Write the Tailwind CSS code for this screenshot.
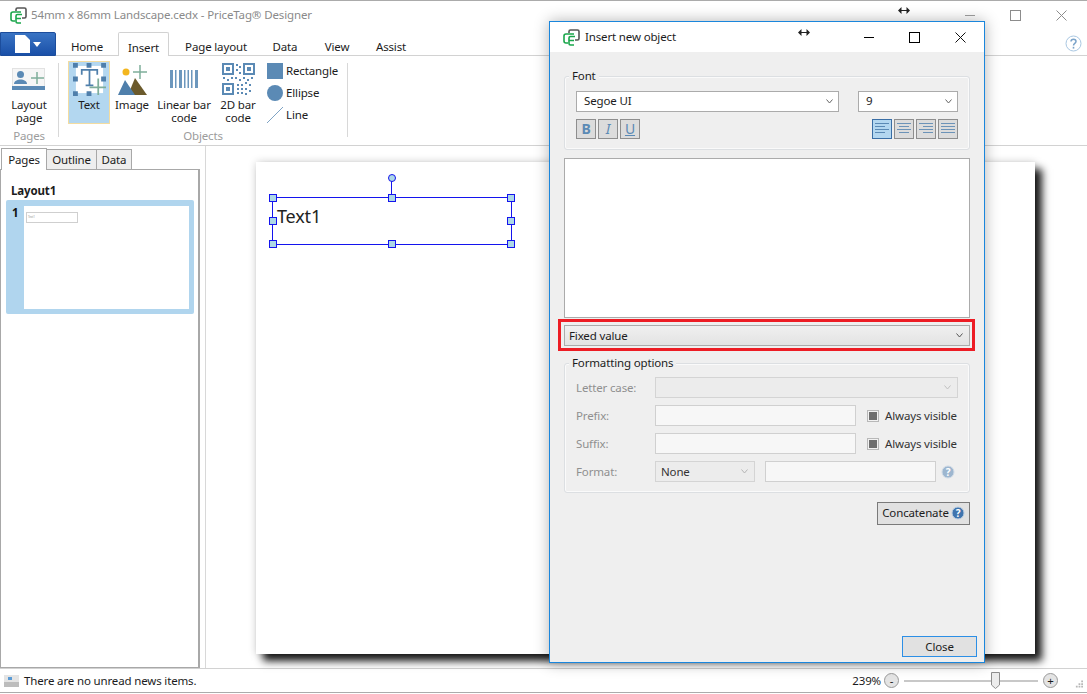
<!DOCTYPE html>
<html lang="en">
<head>
  <meta charset="UTF-8">
  <script src="https://cdn.jsdelivr.net/npm/@tailwindcss/browser@4"></script>
  <title>PriceTag Designer</title>
</head>
<body class="relative w-[1087px] h-[694px] overflow-hidden bg-white text-[11.5px] leading-[14px] tracking-[-0.15px] text-[#1c1c1c] font-['Noto_Sans',sans-serif]">

  <!-- main window -->
  <div class="flex flex-col h-[693px] border-t border-b border-[#ababab]">
    <!-- title bar -->
    <div class="flex items-center h-[31px] shrink-0 pl-[10px] pb-[3px]">
      <svg width="17" height="17" viewBox="0 0 17 17" fill="none" stroke-width="1.6">
        <path d="M6 4V2.500A1.500 1.500 0 0 1 7.500 1H14.500A1.500 1.500 0 0 1 16 2.500V9.500A1.500 1.500 0 0 1 14.500 11H12" stroke="#555"/>
        <path d="M11 5H3A2 2 0 0 0 1 7V12A2 2 0 0 0 3 14H5" stroke="#1aa64b"/>
        <path d="M12 7.500H7.500A1.500 1.500 0 0 0 6 9V14.500A1.500 1.500 0 0 0 7.500 16H11M6.500 11.500H11" stroke="#1aa64b"/>
      </svg>
      <span class="ml-[4px] text-[#8a8a8a] tracking-[-0.13px]">54mm x 86mm Landscape.cedx - PriceTag® Designer</span>
      <div class="ml-auto flex items-center">
        <span class="block w-[10px] h-px bg-[#a0a0a0] mr-[35px]"></span>
        <span class="block w-[11px] h-[11px] border border-[#8c8c8c] mr-[35px]"></span>
        <svg class="mr-[20px]" width="11" height="11" viewBox="0 0 11 11" stroke="#8c8c8c"><path d="M.5 .5L10.500 10.500M10.500 .5L.5 10.500"/></svg>
      </div>
    </div>

    <!-- ribbon tabs -->
    <div class="flex items-end h-[24px] shrink-0 border-b border-[#d2d2d2]">
      <div class="flex items-center justify-center gap-[3px] w-[56px] h-[24px] -mb-px rounded-tr-[2px] border border-[#1c4d9c] bg-gradient-to-b from-[#3a74c4] to-[#1a50a8]">
        <svg width="15" height="18" viewBox="0 0 15 18"><path d="M0 0H10L15 5V18H0Z" fill="#fff"/></svg>
        <svg width="8" height="5" viewBox="0 0 8 5"><path d="M0 0H8L4 5Z" fill="#fff"/></svg>
      </div>
      <div class="w-[62px] h-[23px] pt-[7px] flex items-center justify-center">Home</div>
      <div class="w-[51px] h-[24px] pt-[7px] -mb-px flex items-center justify-center bg-white border border-b-0 border-[#d2d2d2] rounded-t-[2px]">Insert</div>
      <div class="w-[94px] h-[23px] pt-[7px] flex items-center justify-center">Page layout</div>
      <div class="w-[44px] h-[23px] pt-[7px] flex items-center justify-center">Data</div>
      <div class="w-[60px] h-[23px] pt-[7px] flex items-center justify-center">View</div>
      <div class="w-[48px] h-[23px] pt-[7px] flex items-center justify-center">Assist</div>
      <svg class="ml-auto mr-[5px] mb-[3px]" width="17" height="17" viewBox="0 0 17 17"><circle cx="8.500" cy="8.500" r="7.500" fill="#fff" stroke="#a9c7e2"/><path d="M6 6.500C6 3.500 11 3.500 11 6.500C11 8.500 8.500 8.300 8.500 10.500" fill="none" stroke="#7ba3c9" stroke-width="1.500"/><rect x="7.700" y="11.800" width="1.600" height="1.800" fill="#7ba3c9"/></svg>
    </div>

    <!-- ribbon -->
    <div class="flex h-[90px] shrink-0 border-b border-[#d2d2d2] pt-[5px]">
      <div class="flex flex-col items-center w-[58px]">
        <div class="flex flex-col items-center h-[68px]">
          <svg class="mt-[7px]" width="33" height="22" viewBox="0 0 33 22">
            <rect x=".5" y=".5" width="32" height="21" fill="#f6f6f6" stroke="#e2e2e2"/>
            <rect x="0" y="18" width="33" height="4" fill="#5b8ab5"/>
            <circle cx="8.500" cy="6.500" r="3.500" fill="#5b8ab5"/>
            <path d="M2 16C2 10 15 10 15 16Z" fill="#5b8ab5"/>
            <path d="M25 4V16M19 10H32" stroke="#7fae9b" stroke-width="1.500"/>
          </svg>
          <div class="text-center mt-[8px] leading-[13px]">Layout<br>page</div>
        </div>
        <div class="text-[#9c9c9c]">Pages</div>
      </div>
      <div class="w-px h-[74px] mt-[2px] bg-[#d8d8d8]"></div>

      <div class="flex flex-col items-center w-[288px]">
        <div class="flex h-[68px] w-full pl-[9px]">
          <div class="flex flex-col items-center w-[42px] h-[63px] bg-[#b3d7f0] border border-[#f3dca0]">
            <svg class="mt-[1px]" width="33" height="33" viewBox="0 0 34 34">
              <rect x="3" y="3" width="28" height="28" fill="#fff"/>
              <path d="M0 0h5v5h-5zM14 0h5v5h-5zM29 0h5v5h-5zM0 14h5v5h-5zM29 14h5v5h-5zM0 29h5v5h-5zM14 29h5v5h-5z" fill="#4f7fab"/>
              <path d="M9 12V7H25V12M17 7V23M13 23H21" fill="none" stroke="#4f7fab" stroke-width="1.800"/>
              <path d="M26 16V33M17 25H34" stroke="#7fae9b" stroke-width="1.800"/>
            </svg>
            <span class="mt-[2px]">Text</span>
          </div>
          <div class="flex flex-col items-center w-[44px] pl-[2px]">
            <svg class="mt-[4px]" width="31" height="30" viewBox="0 0 31 30">
              <circle cx="8" cy="7" r="3.500" fill="#f3b61f"/>
              <path d="M22 0V14M15 7H29" stroke="#7fae9b" stroke-width="1.500"/>
              <path d="M10 30L17 13L29 30Z" fill="#6b5a2c"/>
              <path d="M0 30L7 15L17 30Z" fill="#4f7fab"/>
            </svg>
            <span class="mt-[3px] -ml-[2px]">Image</span>
          </div>
          <div class="flex flex-col items-center w-[60px]">
            <svg class="mt-[9px]" width="28" height="18" viewBox="0 0 28 18" fill="#6c97bd">
              <path d="M0 0h3v18h-3zM5 0h1.500v18h-1.500zM9 0h3v18h-3zM14 0h1.500v18h-1.500zM17.500 0h1.500v18h-1.500zM21 0h1.500v18h-1.500zM25 0h3v18h-3z"/>
            </svg>
            <div class="text-center leading-[13px] mt-[10px] whitespace-nowrap">Linear bar<br>code</div>
          </div>
          <div class="flex flex-col items-center w-[48px]">
            <svg class="mt-[2px]" width="33" height="32" viewBox="0 0 33 32" fill="#5b8ab5">
              <path fill-rule="evenodd" d="M0 0h12v12h-12zM2 2v8h8v-8zM21 0h12v12h-12zM23 2v8h8v-8zM0 20h12v12h-12zM2 22v8h8v-8z"/>
              <path d="M4 4h4v4h-4zM25 4h4v4h-4zM4 24h4v4h-4zM14 1h2v2h-2zM17 3h2v2h-2zM14 6h2v2h-2zM17 9h2v2h-2zM1 14h2v2h-2zM5 16h2v2h-2zM9 14h2v2h-2zM13 14h2v2h-2zM17 16h2v2h-2zM21 14h2v2h-2zM25 16h2v2h-2zM29 14h2v2h-2zM15 21h2v2h-2zM19 21h2v2h-2zM23 19h2v2h-2zM27 21h2v2h-2zM15 25h2v2h-2zM19 25h2v2h-2zM23 25h2v2h-2zM27 27h2v2h-2zM15 29h2v2h-2zM19 29h2v2h-2zM23 30h2v2h-2z"/>
            </svg>
            <div class="text-center leading-[13px] mt-[3px] whitespace-nowrap">2D bar<br>code</div>
          </div>
          <div class="flex flex-col ml-[5px] pt-[2px] gap-[6px]">
            <div class="flex items-center gap-[3px] h-[16px]"><span class="block w-[16px] h-[16px] bg-[#5b8ab5]"></span>Rectangle</div>
            <div class="flex items-center gap-[3px] h-[16px]"><span class="block w-[16px] h-[16px] rounded-full bg-[#5b8ab5]"></span>Ellipse</div>
            <div class="flex items-center gap-[3px] h-[16px]"><svg width="16" height="16" viewBox="0 0 16 16"><path d="M0 16L16 0" stroke="#7fa3c4"/></svg>Line</div>
          </div>
        </div>
        <div class="text-[#9c9c9c]">Objects</div>
      </div>
      <div class="w-px h-[74px] mt-[2px] bg-[#d8d8d8]"></div>
    </div>

    <!-- work area -->
    <div class="flex flex-1 min-h-0 border-b border-[#d2d2d2]">
      <!-- left panel -->
      <div class="flex flex-col w-[200px] shrink-0 pt-[1px]">
        <div class="flex items-end h-[22px] pl-px">
          <div class="w-[46px] h-[22px] -mb-px z-10 flex items-center justify-center bg-white border border-b-0 border-[#a8a8a8]">Pages</div>
          <div class="w-[50px] h-[20px] flex items-center justify-center bg-[#eeeeee] border border-l-0 border-b-0 border-[#a8a8a8]">Outline</div>
          <div class="w-[35px] h-[20px] flex items-center justify-center bg-[#eeeeee] border border-l-0 border-b-0 border-[#a8a8a8]">Data</div>
        </div>
        <div class="flex-1 border border-[#a8a8a8] border-r-2 pl-[5px] pr-[4px] pt-[14px]">
          <div class="font-bold pl-[5px] h-[16px]">Layout1</div>
          <div class="flex h-[114px] rounded-[2px] bg-[#b0d5ee] p-[6px] pr-[5px]">
            <span class="w-[12px] font-bold text-[#111]">1</span>
            <div class="flex-1 h-[103px] bg-white p-[2px] pt-[6px]">
              <div class="w-[52px] h-[11px] border border-[#cfcfcf] text-[3px] leading-[9px] pl-[1px] text-[#999]">Text1</div>
            </div>
          </div>
        </div>
      </div>

      <!-- canvas -->
      <div class="flex-1 ml-[5px] border-l border-[#d8d8d8] pl-[50px] pt-[16px]">
        <div class="w-[779px] h-[492px] bg-white pt-[35px] pl-[16px] shadow-[0_0_8px_rgba(0,0,0,0.18),7px_7px_8px_rgba(0,0,0,0.9)]">
          <div class="relative w-[240px] h-[48px] border-[1.5px] border-[#1414ee] pl-[4px] pt-[6px] text-[18px] leading-[24px] text-[#222]">
            Text1
            <span class="absolute -left-[4px] -top-[4px] w-[8px] h-[8px] bg-[#add8e6] border border-[#1414ee]"></span>
            <span class="absolute left-[115px] -top-[4px] w-[8px] h-[8px] bg-[#add8e6] border border-[#1414ee]"></span>
            <span class="absolute -right-[4px] -top-[4px] w-[8px] h-[8px] bg-[#add8e6] border border-[#1414ee]"></span>
            <span class="absolute -left-[4px] top-[19px] w-[8px] h-[8px] bg-[#add8e6] border border-[#1414ee]"></span>
            <span class="absolute -right-[4px] top-[19px] w-[8px] h-[8px] bg-[#add8e6] border border-[#1414ee]"></span>
            <span class="absolute -left-[4px] -bottom-[4px] w-[8px] h-[8px] bg-[#add8e6] border border-[#1414ee]"></span>
            <span class="absolute left-[115px] -bottom-[4px] w-[8px] h-[8px] bg-[#add8e6] border border-[#1414ee]"></span>
            <span class="absolute -right-[4px] -bottom-[4px] w-[8px] h-[8px] bg-[#add8e6] border border-[#1414ee]"></span>
            <span class="absolute left-[118px] -top-[17px] w-px h-[14px] bg-[#1414ee]"></span>
            <span class="absolute left-[115px] -top-[24px] w-[8px] h-[8px] rounded-full bg-[#add8e6] border border-[#1414ee]"></span>
          </div>
        </div>
      </div>
    </div>

    <!-- status bar -->
    <div class="flex items-center h-[23px] shrink-0 pl-[4px]">
      <svg width="15" height="12" viewBox="0 0 15 12"><rect width="15" height="12" fill="#e4e4e4"/><rect y="7" width="15" height="5" fill="#bdbdbd"/><rect x="4" y="2" width="4" height="3" fill="#5b9bd5"/></svg>
      <span class="ml-[5px]">There are no unread news items.</span>
      <div class="ml-auto flex items-center pr-[4px]">
        <span>239%</span>
        <span class="ml-[3px] flex items-center justify-center w-[15px] h-[15px] rounded-full bg-[#e4e4e4] border border-[#9a9a9a] leading-[11px]">-</span>
        <div class="relative w-[134px] h-[2px] mx-[5px] bg-[#c8c8c8]">
          <svg class="absolute left-[87px] -top-[8px]" width="9" height="17" viewBox="0 0 9 17"><path d="M.5 .5H8.500V13L4.500 16.500L.5 13Z" fill="#ececec" stroke="#8e8e8e"/></svg>
        </div>
        <span class="flex items-center justify-center w-[15px] h-[15px] rounded-full bg-[#e4e4e4] border border-[#9a9a9a] leading-[11px]">+</span>
        <svg class="ml-[17px] mt-[8px]" width="8" height="9" viewBox="0 0 9 9" fill="#b8b8b8"><path d="M7 0h2v2h-2zM4 3h2v2h-2zM7 3h2v2h-2zM1 6h2v2h-2zM4 6h2v2h-2zM7 6h2v2h-2z"/></svg>
      </div>
    </div>
  </div>

  <!-- dialog -->
  <div class="absolute left-[549px] top-[21px] w-[436px] h-[642px] flex flex-col border border-[#1a86dc] bg-[#efefef] shadow-[0_0_14px_rgba(0,0,0,0.3)]">
    <div class="flex items-center h-[30px] shrink-0 bg-white pl-[13px]">
      <svg width="17" height="17" viewBox="0 0 17 17" fill="none" stroke-width="1.600">
        <path d="M6 4V2.500A1.500 1.500 0 0 1 7.500 1H14.500A1.500 1.500 0 0 1 16 2.500V9.500A1.500 1.500 0 0 1 14.500 11H12" stroke="#555"/>
        <path d="M11 5H3A2 2 0 0 0 1 7V12A2 2 0 0 0 3 14H5" stroke="#1aa64b"/>
        <path d="M12 7.500H7.500A1.500 1.500 0 0 0 6 9V14.500A1.500 1.500 0 0 0 7.500 16H11M6.500 11.500H11" stroke="#1aa64b"/>
      </svg>
      <span class="ml-[5px]">Insert new object</span>
      <div class="ml-auto flex items-center pr-[18px]">
        <span class="block w-[10px] h-px bg-black mr-[35px]"></span>
        <span class="block w-[11px] h-[11px] border border-black mr-[35px]"></span>
        <svg width="11" height="11" viewBox="0 0 11 11" stroke="#111"><path d="M.5 .5L10.500 10.500M10.500 .5L.5 10.500"/></svg>
      </div>
    </div>

    <div class="flex flex-col flex-1 pl-[14px] pr-[14px] pt-[24px] pb-[5px]">
      <!-- font group -->
      <div class="relative h-[74px] shrink-0 rounded-[3px] border border-[#dcdfe2] shadow-[inset_0_0_0_1px_#fafafa] pt-[14px] pl-[11px] pr-[11px]">
        <span class="absolute left-[4px] -top-[8px] px-[3px] bg-[#efefef]">Font</span>
        <div class="flex justify-between">
          <div class="flex items-center justify-between w-[263px] h-[21px] pb-px bg-white border border-[#ababab] pl-[7px] pr-[5px]">Segoe UI
            <svg width="7" height="5" viewBox="0 0 7 5" fill="none" stroke="#666"><path d="M.5 .5L3.500 4L6.500 .5"/></svg></div>
          <div class="flex items-center justify-between w-[100px] h-[21px] pb-px bg-white border border-[#ababab] pl-[7px] pr-[5px]">9
            <svg width="7" height="5" viewBox="0 0 7 5" fill="none" stroke="#666"><path d="M.5 .5L3.500 4L6.500 .5"/></svg></div>
        </div>
        <div class="flex justify-between mt-[7px]">
          <div class="flex gap-[2px] text-[14px] text-[#5b8ab5]">
            <span class="flex items-center justify-center w-[20px] h-[20px] bg-[#dcdcdc] border border-[#8e8e8e] font-bold">B</span>
            <span class="flex items-center justify-center w-[20px] h-[20px] bg-[#dcdcdc] border border-[#8e8e8e] italic">I</span>
            <span class="flex items-center justify-center w-[20px] h-[20px] bg-[#dcdcdc] border border-[#8e8e8e] underline">U</span>
          </div>
          <div class="flex gap-[2px]">
            <span class="flex items-center justify-center w-[20px] h-[20px] bg-[#b3d7f0] border border-[#3a6ea5]"><svg width="14" height="12" viewBox="0 0 14 12" stroke="#5b8ab5"><path d="M0 .5H14M0 3.500H10M0 6.500H14M0 9.500H10"/></svg></span>
            <span class="flex items-center justify-center w-[20px] h-[20px] bg-[#dcdcdc] border border-[#8e8e8e]"><svg width="14" height="12" viewBox="0 0 14 12" stroke="#6c93b8"><path d="M0 .5H14M2 3.500H12M0 6.500H14M2 9.500H12"/></svg></span>
            <span class="flex items-center justify-center w-[20px] h-[20px] bg-[#dcdcdc] border border-[#8e8e8e]"><svg width="14" height="12" viewBox="0 0 14 12" stroke="#6c93b8"><path d="M0 .5H14M4 3.500H14M0 6.500H14M4 9.500H14"/></svg></span>
            <span class="flex items-center justify-center w-[20px] h-[20px] bg-[#dcdcdc] border border-[#8e8e8e]"><svg width="14" height="12" viewBox="0 0 14 12" stroke="#6c93b8"><path d="M0 .5H14M0 3.500H14M0 6.500H14M0 9.500H14"/></svg></span>
          </div>
        </div>
      </div>

      <!-- text value -->
      <div class="h-[160px] shrink-0 mt-[8px] bg-white border border-[#ababab]"></div>

      <!-- source select with red highlight -->
      <div class="relative flex items-center justify-between h-[21px] shrink-0 mt-[7px] border border-[#ababab] bg-gradient-to-b from-[#f0f0f0] to-[#e3e3e3] pl-[4px] pr-[6px]">
        Fixed value
        <svg width="7" height="5" viewBox="0 0 7 5" fill="none" stroke="#555"><path d="M.5 .5L3.500 4L6.500 .5"/></svg>
        <span class="absolute -left-[7px] -right-[6px] -top-[7px] -bottom-[6px] border-[3px] border-[#ed1c24]"></span>
      </div>

      <!-- formatting group -->
      <div class="relative h-[130px] shrink-0 mt-[17px] rounded-[3px] border border-[#dcdfe2] shadow-[inset_0_0_0_1px_#fafafa] pt-[13px] pl-[11px] pr-[11px] flex flex-col gap-[7px] text-[#8f8f8f]">
        <span class="absolute left-[4px] -top-[8px] px-[3px] bg-[#efefef] text-[#1c1c1c]">Formatting options</span>
        <div class="flex items-center h-[21px]">
          <span class="w-[79px] shrink-0">Letter case:</span>
          <div class="flex-1 h-[21px] flex items-center justify-end pr-[6px] bg-[#ececec] border border-[#d4d4d4]"><svg width="7" height="5" viewBox="0 0 7 5" fill="none" stroke="#c0c0c0"><path d="M.5 .5L3.500 4L6.500 .5"/></svg></div>
        </div>
        <div class="flex items-center h-[21px]">
          <span class="w-[79px] shrink-0">Prefix:</span>
          <div class="w-[201px] shrink-0 h-[21px] bg-[#f7f7f7] border border-[#d0d0d0]"></div>
          <span class="flex items-center justify-center w-[12px] h-[12px] shrink-0 ml-[11px] bg-[#f2f2f2] border border-[#b8b8b8]"><span class="block w-[8px] h-[8px] bg-[#6f6f6f]"></span></span>
          <span class="ml-[6px] text-[#333] whitespace-nowrap">Always visible</span>
        </div>
        <div class="flex items-center h-[21px]">
          <span class="w-[79px] shrink-0">Suffix:</span>
          <div class="w-[201px] shrink-0 h-[21px] bg-[#f7f7f7] border border-[#d0d0d0]"></div>
          <span class="flex items-center justify-center w-[12px] h-[12px] shrink-0 ml-[11px] bg-[#f2f2f2] border border-[#b8b8b8]"><span class="block w-[8px] h-[8px] bg-[#6f6f6f]"></span></span>
          <span class="ml-[6px] text-[#333] whitespace-nowrap">Always visible</span>
        </div>
        <div class="flex items-center h-[21px]">
          <span class="w-[79px] shrink-0">Format:</span>
          <div class="flex items-center justify-between w-[100px] h-[21px] bg-[#ececec] border border-[#d4d4d4] pl-[5px] pr-[6px] text-[#333]">None
            <svg width="7" height="5" viewBox="0 0 7 5" fill="none" stroke="#b5b5b5"><path d="M.5 .5L3.500 4L6.500 .5"/></svg></div>
          <div class="w-[171px] h-[21px] ml-[10px] bg-[#f7f7f7] border border-[#d0d0d0]"></div>
          <svg class="ml-[5px]" width="14" height="14" viewBox="0 0 14 14"><circle cx="7" cy="7" r="6" fill="#9db6cf" stroke="#d0dbe6"/><text x="7" y="10.500" text-anchor="middle" font-size="10" font-weight="700" fill="#fff">?</text></svg>
        </div>
      </div>

      <!-- concatenate -->
      <div class="self-end flex items-center justify-center gap-[2px] w-[93px] h-[23px] pb-px mt-[9px] bg-[#e1e1e1] border border-[#7a7a7a]">
        Concatenate
        <svg width="14" height="14" viewBox="0 0 14 14"><circle cx="7" cy="7" r="6" fill="#3f74ae" stroke="#b9cde0"/><text x="7" y="10.500" text-anchor="middle" font-size="10" font-weight="700" fill="#fff">?</text></svg>
      </div>

      <!-- close -->
      <div class="self-end mt-auto -mr-[7px] flex items-center justify-center w-[75px] h-[21px] bg-[#e1e1e1] border border-[#2c8fe6]">Close</div>
    </div>
  </div>

  <!-- resize cursors left in the capture -->
  <svg class="absolute left-[898px] top-[7px]" width="12" height="7" viewBox="0 0 12 7" fill="#222"><path d="M0 3.500L3.500 0V3H8.500V0L12 3.500L8.500 7V4H3.500V7Z"/></svg>
  <svg class="absolute left-[798px] top-[29px]" width="12" height="7" viewBox="0 0 12 7" fill="#222"><path d="M0 3.500L3.500 0V3H8.500V0L12 3.500L8.500 7V4H3.500V7Z"/></svg>
</body>
</html>
